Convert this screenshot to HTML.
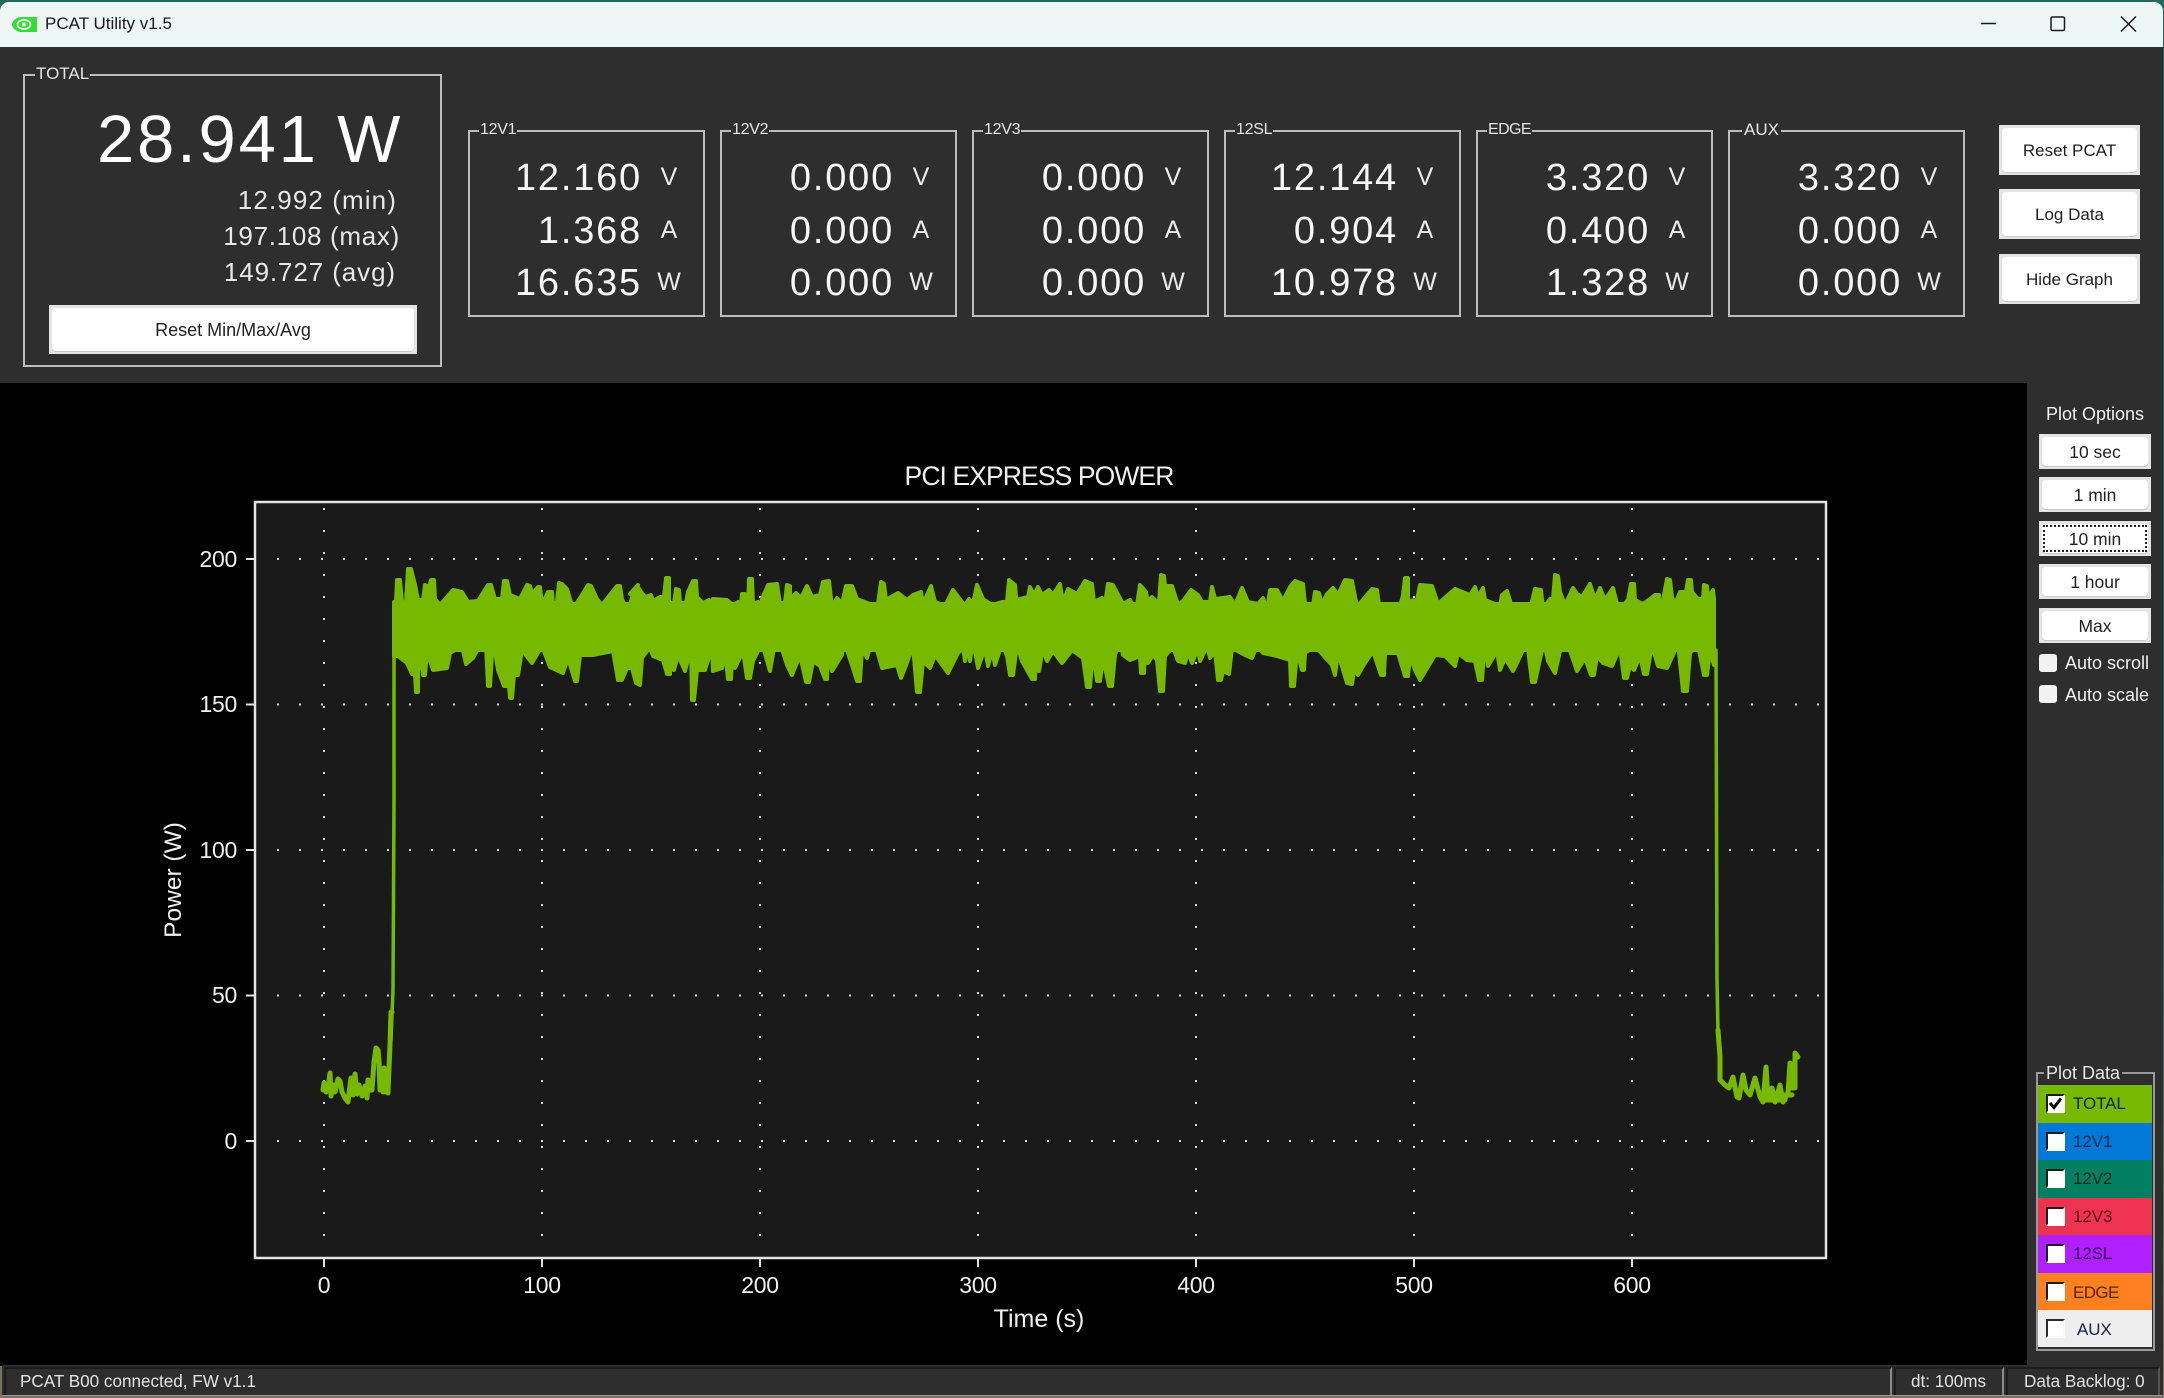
<!DOCTYPE html>
<html><head><meta charset="utf-8"><title>PCAT Utility v1.5</title>
<style>
html,body{margin:0;padding:0}
body{width:2164px;height:1398px;overflow:hidden;position:relative;background:linear-gradient(#22695f 0,#22695f 60%,#7d6f62 100%);font-family:"Liberation Sans",sans-serif;color:#f0f0f0}
.a{position:absolute;white-space:nowrap}
.title{left:0;top:2px;width:2163px;height:45px;background:#eef5f5;border-radius:9px 9px 0 0}
.panel{background:#2e2e2e}
.box{position:absolute;border:2px solid #bdbdbd;box-sizing:border-box}
.lb{position:absolute;background:#2e2e2e;line-height:20px;height:20px;font-size:16px;letter-spacing:-.3px;color:#e6e6e6;padding:0 1px}
.num{position:absolute;font-size:38px;line-height:44px;letter-spacing:1.8px;text-align:right;width:150px;color:#f7f7f7}
.un{position:absolute;font-size:25px;line-height:30px;width:40px;text-align:center;color:#ececec}
.btn{position:absolute;z-index:0;background:#e4e4e4;box-sizing:border-box;color:#222;font-size:17px;text-align:center}
.btn::before{content:"";position:absolute;z-index:-1;left:3px;top:3px;right:3px;bottom:3px;background:#fff;border-radius:4px;box-shadow:0 1px 0 #c8c8c8}
.row{position:absolute;left:2038px;width:114px;height:37.5px;font-size:17px;letter-spacing:-.1px;line-height:37px}
.row span{position:absolute;left:35px;top:0}
.cb{position:absolute;left:8px;top:9px;width:19px;height:19px;box-sizing:border-box;background:#fff;border:2px solid rgba(255,255,255,.45);border-top-color:#1c1c1c;border-left-color:#1c1c1c}
.chk{position:absolute;left:2039px;width:18px;height:18px;background:#f2f2f2;border-radius:3px}
.t{font-size:17.5px;line-height:22px;color:#f0f0f0}
.st{font-size:17.1px;line-height:24px;color:#e2e2e2}
.o{left:2039px;width:112px;height:35px;line-height:36px;font-size:17.5px}
</style></head><body>

<div class="a title"></div>
<svg class="a" style="left:12px;top:17px" width="26" height="15" viewBox="0 0 26 15"><path d="M8 0H25V15H8C3 14 0 10 0 7.500C0 5 3 1 8 0Z" fill="#38dc38"/><ellipse cx="12" cy="7.500" rx="6.500" ry="4.500" fill="none" stroke="#e8fbe8" stroke-width="1.800"/><circle cx="12" cy="7.500" r="2" fill="#e8fbe8"/></svg>
<div class="a" style="left:45px;top:14px;font-size:17px;line-height:20px;color:#1a1a1a">PCAT Utility v1.5</div>
<svg class="a" style="left:1975px;top:10px" width="170" height="30" viewBox="0 0 170 30" fill="none" stroke="#1a1a1a" stroke-width="1.500"><path d="M6 13.500H21"/><rect x="76" y="7" width="13.500" height="13.500" rx="1.500"/><path d="M146 6.500L161 21.500M161 6.500L146 21.500"/></svg>

<div class="a panel" style="left:0;top:47px;width:2163px;height:336px"></div>
<div class="a panel" style="left:2027px;top:383px;width:136px;height:983px"></div>
<div class="a" style="left:0;top:383px;width:2027px;height:983px;background:#000"></div>

<!-- TOTAL -->
<div class="box" style="left:23px;top:74px;width:419px;height:293px"></div>
<div class="lb" style="left:35px;top:64px;font-size:17px;letter-spacing:0">TOTAL</div>
<div class="a" style="left:97px;top:104px;font-size:67px;line-height:72px;letter-spacing:2.800px;word-spacing:-3px;color:#fff">28.941 W</div>
<div class="a" style="right:1767px;top:185px;font-size:26px;line-height:30px;letter-spacing:1.100px;color:#e8e8e8">12.992 (min)</div>
<div class="a" style="right:1764px;top:221px;font-size:26px;line-height:30px;letter-spacing:.7px;color:#e8e8e8">197.108 (max)</div>
<div class="a" style="right:1768px;top:257px;font-size:26px;line-height:30px;letter-spacing:.9px;color:#e8e8e8">149.727 (avg)</div>
<div class="btn" style="left:49px;top:305px;width:368px;height:49px;line-height:50px;font-size:18px">Reset Min/Max/Avg</div>

<!-- 12V1 -->
<div class="box" style="left:468px;top:130px;width:237px;height:187px"></div>
<div class="lb" style="left:479px;top:120px">12V1</div>
<div class="num" style="left:492px;top:156px">12.160</div><div class="un" style="left:649px;top:162px">V</div>
<div class="num" style="left:492px;top:209px">1.368</div><div class="un" style="left:649px;top:215px">A</div>
<div class="num" style="left:492px;top:261px">16.635</div><div class="un" style="left:649px;top:267px">W</div>
<!-- 12V2 -->
<div class="box" style="left:720px;top:130px;width:237px;height:187px"></div>
<div class="lb" style="left:731px;top:120px">12V2</div>
<div class="num" style="left:744px;top:156px">0.000</div><div class="un" style="left:901px;top:162px">V</div>
<div class="num" style="left:744px;top:209px">0.000</div><div class="un" style="left:901px;top:215px">A</div>
<div class="num" style="left:744px;top:261px">0.000</div><div class="un" style="left:901px;top:267px">W</div>
<!-- 12V3 -->
<div class="box" style="left:972px;top:130px;width:237px;height:187px"></div>
<div class="lb" style="left:983px;top:120px">12V3</div>
<div class="num" style="left:996px;top:156px">0.000</div><div class="un" style="left:1153px;top:162px">V</div>
<div class="num" style="left:996px;top:209px">0.000</div><div class="un" style="left:1153px;top:215px">A</div>
<div class="num" style="left:996px;top:261px">0.000</div><div class="un" style="left:1153px;top:267px">W</div>
<!-- 12SL -->
<div class="box" style="left:1224px;top:130px;width:237px;height:187px"></div>
<div class="lb" style="left:1235px;top:120px">12SL</div>
<div class="num" style="left:1248px;top:156px">12.144</div><div class="un" style="left:1405px;top:162px">V</div>
<div class="num" style="left:1248px;top:209px">0.904</div><div class="un" style="left:1405px;top:215px">A</div>
<div class="num" style="left:1248px;top:261px">10.978</div><div class="un" style="left:1405px;top:267px">W</div>
<!-- EDGE -->
<div class="box" style="left:1476px;top:130px;width:237px;height:187px"></div>
<div class="lb" style="left:1487px;top:120px;letter-spacing:-.6px">EDGE</div>
<div class="num" style="left:1500px;top:156px">3.320</div><div class="un" style="left:1657px;top:162px">V</div>
<div class="num" style="left:1500px;top:209px">0.400</div><div class="un" style="left:1657px;top:215px">A</div>
<div class="num" style="left:1500px;top:261px">1.328</div><div class="un" style="left:1657px;top:267px">W</div>
<!-- AUX -->
<div class="box" style="left:1728px;top:130px;width:237px;height:187px"></div>
<div class="lb" style="left:1742px;top:120px;padding:0 2px;font-size:17px;letter-spacing:0">AUX</div>
<div class="num" style="left:1752px;top:156px">3.320</div><div class="un" style="left:1909px;top:162px">V</div>
<div class="num" style="left:1752px;top:209px">0.000</div><div class="un" style="left:1909px;top:215px">A</div>
<div class="num" style="left:1752px;top:261px">0.000</div><div class="un" style="left:1909px;top:267px">W</div>

<div class="btn" style="left:1999px;top:125px;width:141px;height:50px;line-height:52px">Reset PCAT</div>
<div class="btn" style="left:1999px;top:189px;width:141px;height:50px;line-height:52px">Log Data</div>
<div class="btn" style="left:1999px;top:254px;width:141px;height:50px;line-height:52px">Hide Graph</div>

<!-- Chart -->
<svg class="a" style="left:0;top:0" width="2164" height="1398" viewBox="0 0 2164 1398" font-family="'Liberation Sans',sans-serif">
<rect x="255" y="502" width="1571" height="756" fill="#1a1a1a" stroke="#e4e4e4" stroke-width="2.500"/>
<g stroke="#d8d8d8" stroke-width="2" stroke-dasharray="2 20" fill="none">
<path d="M277 559H1825M277 704.500H1825M277 850H1825M277 995.500H1825M277 1141H1825"/>
<path d="M324 1236V503M542 1236V503M760 1236V503M978 1236V503M1196 1236V503M1414 1236V503M1632 1236V503"/>
</g>
<g stroke="#e4e4e4" stroke-width="2" fill="none">
<path d="M246 559H255M246 704.500H255M246 850H255M246 995.500H255M246 1141H255"/>
<path d="M324 1258V1267M542 1258V1267M760 1258V1267M978 1258V1267M1196 1258V1267M1414 1258V1267M1632 1258V1267"/>
</g>
<g fill="#76b900" stroke="#76b900" stroke-width="4" stroke-linejoin="round">
<rect x="394" y="602" width="1320" height="50" stroke="none"/>
<path transform="translate(0 2)" d="M394 630L394 600 396 600 397 578 400 578 402 600 406 601 408 567 411 567 415 583 418 598 423 598 425 583 429 585 431 578 434 578 435 597 440 603 453 588 462 590 468 600 478 599 488 583 491 583 495 597 502 597 504 579 507 579 510 593 520 597 527 583 530 584 532 592 538 585 540 585 542 603 548 590 552 590 553 603 557 600 559 581 562 582 567 587 573 607 582 593 588 583 591 584 597 597 602 603 617 584 620 584 622 597 628 610 633 592 638 583 630 592 637 584 645 595 651 593 653 599 660 595 664 595 666 576 669 576 669 601 674 601 676 587 679 588 680 601 686 601 688 590 693 579 696 579 697 595 703 601 709 598 712 608 713 597 727 598 733 603 738 600 740 615 742 592 745 592 745 607 748 607 749 577 752 577 753 602 758 600 760 608 762 597 768 583 777 582 780 602 785 600 787 583 790 584 790 597 796 591 801 596 807 584 812 595 820 593 823 580 829 579 832 605 837 596 842 602 846 584 852 584 857 597 870 602 878 602 881 580 884 582 886 598 898 591 907 598 913 593 921 590 923 602 931 584 935 600 945 604 953 588 962 600 965 603 969 597 973 602 977 583 983 597 992 603 1002 600 1007 600 1009 578 1015 583 1017 604 1020 597 1028 595 1030 585 1034 593 1038 585 1042 593 1049 588 1053 593 1060 582 1063 601 1068 587 1077 592 1085 579 1092 582 1094 600 1102 596 1105 602 1108 582 1113 583 1123 602 1130 598 1136 610 1140 583 1146 590 1148 600 1152 595 1157 600 1159 600 1161 573 1164 574 1165 584 1172 584 1178 603 1183 599 1191 588 1198 593 1202 600 1210 600 1212 585 1215 597 1230 595 1235 603 1242 586 1248 600 1258 602 1263 596 1267 608 1270 588 1277 588 1283 599 1290 585 1295 579 1303 582 1305 602 1312 609 1315 590 1319 591 1322 603 1327 592 1333 586 1338 593 1345 578 1352 579 1357 605 1362 599 1372 587 1377 588 1379 603 1397 603 1398 613 1403 593 1405 576 1408 576 1408 599 1417 598 1420 583 1432 584 1438 602 1448 593 1455 587 1470 593 1475 585 1478 595 1483 586 1485 598 1495 602 1497 620 1502 593 1507 589 1511 602 1522 602 1530 608 1535 587 1541 588 1543 607 1550 597 1553 597 1555 573 1558 574 1560 590 1565 603 1573 586 1577 592 1582 595 1590 582 1595 598 1600 586 1605 598 1613 586 1617 602 1623 603 1628 598 1631 582 1634 582 1635 598 1643 602 1650 597 1655 593 1659 593 1662 615 1664 593 1667 577 1670 578 1672 595 1675 602 1680 590 1686 590 1688 578 1691 578 1692 590 1698 597 1703 597 1704 583 1707 584 1708 596 1713 588 1714 597 1714 630Z"/>
<path transform="translate(0 -2)" d="M394 630L394 658 398 658 407 665 412 676 415 676 416 694 418 694 418 673 420 653 423 677 425 677 427 653 433 672 447 670 450 655 462 648 466 666 473 660 480 647 486 647 488 688 490 688 493 640 498 672 504 688 509 688 510 700 512 700 514 677 518 677 522 652 532 665 542 648 550 669 563 675 568 660 575 683 577 683 580 657 593 657 613 653 618 682 622 682 627 670 632 670 636 685 640 687 642 660 650 649 653 658 663 662 667 676 670 676 671 652 674 672 678 657 685 673 691 650 692 702 694 702 697 672 705 672 712 649 713 673 722 670 725 652 728 681 731 681 732 660 735 670 743 653 747 680 750 680 753 663 762 645 770 673 774 650 780 645 787 667 792 677 800 657 806 684 809 684 813 663 820 668 825 681 827 681 828 652 832 673 842 657 843 640 852 667 857 683 860 683 862 650 867 660 873 638 882 670 897 667 901 680 905 670 913 648 917 694 920 694 923 663 930 670 935 657 948 675 958 655 963 650 965 663 967 645 970 663 973 642 978 670 985 650 988 668 992 652 995 667 1002 646 1007 658 1010 677 1013 677 1017 647 1022 663 1032 681 1035 681 1036 650 1039 673 1043 650 1047 663 1053 653 1062 665 1072 652 1083 660 1087 689 1090 689 1093 652 1097 683 1100 683 1103 660 1109 688 1112 688 1115 657 1120 642 1123 657 1130 662 1140 658 1141 675 1144 675 1145 652 1148 665 1153 657 1157 662 1160 693 1163 693 1165 658 1173 649 1178 663 1185 665 1188 653 1192 665 1198 650 1200 663 1207 648 1210 660 1215 653 1218 682 1221 682 1223 673 1229 676 1232 650 1245 657 1252 660 1257 648 1263 655 1277 658 1290 662 1291 688 1294 688 1297 653 1302 672 1304 672 1305 655 1315 648 1332 667 1335 677 1338 655 1347 685 1352 686 1355 667 1358 677 1363 668 1373 653 1381 677 1384 677 1385 655 1398 655 1405 678 1408 678 1410 658 1415 672 1420 682 1435 657 1445 658 1455 668 1458 655 1467 662 1475 663 1479 682 1482 682 1485 643 1488 668 1497 653 1500 672 1505 660 1513 673 1517 665 1527 643 1532 684 1535 684 1544 643 1548 663 1555 675 1560 653 1568 647 1577 673 1585 660 1591 677 1594 677 1597 658 1603 665 1612 668 1620 650 1624 680 1627 680 1630 667 1634 672 1640 658 1644 676 1647 676 1652 647 1658 668 1667 670 1673 657 1678 645 1683 693 1687 693 1690 655 1698 647 1704 677 1707 677 1710 653 1714 667 1714 630Z"/>
</g>
<g fill="none" stroke="#76b900" stroke-linejoin="round" stroke-linecap="round">
<path stroke-width="5" d="M323 1090L324 1083 326 1092 328 1088 330 1073 331 1096 333 1085 335 1092 338 1079 340 1081 342 1092 345 1098 348 1102 350 1085 351 1078 353 1095 355 1074 357 1094 359 1085 362 1096 365 1086 367 1098 368 1080 370 1090 372 1090 374 1062 376 1048 378 1050 379 1060 380 1090 381 1072 383 1092 384 1068 386 1092 387 1072 388 1093"/>
<path stroke-width="5" d="M388 1092L390 1045 391 1012 392 1012"/>
<path stroke-width="3.500" d="M391 1040L393 990 394 800 394 655"/>
<path stroke-width="3.500" d="M1716 650L1717 980 1718 1033"/>
<path stroke-width="5" d="M1718 1030L1720 1057 1720 1080 1725 1085 1729 1088 1733 1077 1737 1097 1739 1098 1743 1075 1746 1090 1750 1095 1755 1078 1760 1097 1763 1102 1766 1067 1768 1100 1772 1088 1775 1102 1780 1085 1783 1102 1788 1093 1790 1063 1792 1088 1795 1088 1795 1053 1798 1057"/>
<path stroke-width="5" d="M1763 1100H1785M1768 1095H1792"/>
</g>
<g fill="#f0f0f0">
<text x="1039" y="485" font-size="26.500" letter-spacing="-.9" text-anchor="middle">PCI EXPRESS POWER</text>
<g font-size="23" text-anchor="end" letter-spacing="-.3">
<text x="237" y="567">200</text><text x="237" y="712">150</text><text x="237" y="858">100</text><text x="237" y="1003">50</text><text x="237" y="1149">0</text>
</g>
<g font-size="23" text-anchor="middle" letter-spacing="-.3">
<text x="324" y="1293">0</text><text x="542" y="1293">100</text><text x="760" y="1293">200</text><text x="978" y="1293">300</text><text x="1196" y="1293">400</text><text x="1414" y="1293">500</text><text x="1632" y="1293">600</text>
</g>
<text x="1039" y="1327" font-size="25" text-anchor="middle">Time (s)</text>
<text transform="translate(181 880) rotate(-90)" font-size="24.500" text-anchor="middle">Power (W)</text>
</g>
</svg>

<!-- Plot options -->
<div class="a t" style="left:2046px;top:403px;font-size:18px">Plot Options</div>
<div class="btn o" style="top:434px">10 sec</div>
<div class="btn o" style="top:477px">1 min</div>
<div class="btn o" style="top:521px">10 min<div style="position:absolute;left:4px;top:4px;right:4px;bottom:4px;border:2px dotted #222"></div></div>
<div class="btn o" style="top:564px">1 hour</div>
<div class="btn o" style="top:608px">Max</div>
<div class="chk" style="top:654px"></div>
<div class="a t" style="left:2065px;top:652px;font-size:18px">Auto scroll</div>
<div class="chk" style="top:685px"></div>
<div class="a t" style="left:2065px;top:684px;font-size:18px">Auto scale</div>

<!-- Plot data -->
<div class="box" style="left:2036px;top:1072px;width:119px;height:279px;border-color:#9a9a9a"></div>
<div class="lb" style="left:2044px;top:1063px;font-size:18px;letter-spacing:0;padding:0 2px">Plot Data</div>
<div class="row" style="top:1085px;background:#76b900;color:#0e2400"><div class="cb"><svg width="15" height="15" viewBox="0 0 15 15" style="display:block"><path d="M2 7L6 11.500L13 2.500" fill="none" stroke="#000" stroke-width="3"/></svg></div><span>TOTAL</span></div>
<div class="row" style="top:1122.500px;background:#0078d7;color:#002c55"><div class="cb"></div><span>12V1</span></div>
<div class="row" style="top:1160px;background:#008060;color:#00281e"><div class="cb"></div><span>12V2</span></div>
<div class="row" style="top:1197.500px;background:#ee3350;color:#5a0a18"><div class="cb"></div><span>12V3</span></div>
<div class="row" style="top:1235px;background:#b020ff;color:#3c0060"><div class="cb"></div><span>12SL</span></div>
<div class="row" style="top:1272.500px;background:#ff8020;color:#552600"><div class="cb"></div><span style="letter-spacing:-.6px;top:1px">EDGE</span></div>
<div class="row" style="top:1310px;height:37px;background:#eeeeee;color:#1c2050"><div class="cb" style="border-color:#2a2a2a #f8f8f8 #f8f8f8 #2a2a2a"></div><span style="left:39px;top:1px">AUX</span></div>

<!-- Status bar -->
<div class="a" style="left:2px;top:1365px;width:2161px;height:31px;background:#2e2e2e;border-bottom:1px solid #999;box-sizing:border-box"></div>
<div class="a" style="left:4px;top:1367px;width:1888px;height:28px;border-top:2px solid #1c1c1c;border-left:2px solid #1c1c1c;border-right:2px solid #8a8a8a;box-sizing:border-box"></div>
<div class="a" style="left:1894px;top:1367px;width:110px;height:28px;border-top:2px solid #1c1c1c;border-left:2px solid #1c1c1c;border-right:2px solid #8a8a8a;box-sizing:border-box"></div>
<div class="a" style="left:2006px;top:1367px;width:154px;height:28px;border-top:2px solid #1c1c1c;border-left:2px solid #1c1c1c;border-right:2px solid #555;box-sizing:border-box"></div>
<div class="a st" style="left:20px;top:1370px">PCAT B00 connected, FW v1.1</div>
<div class="a st" style="left:1911px;top:1370px">dt: 100ms</div>
<div class="a st" style="left:2024px;top:1370px">Data Backlog: 0</div>
</body></html>
